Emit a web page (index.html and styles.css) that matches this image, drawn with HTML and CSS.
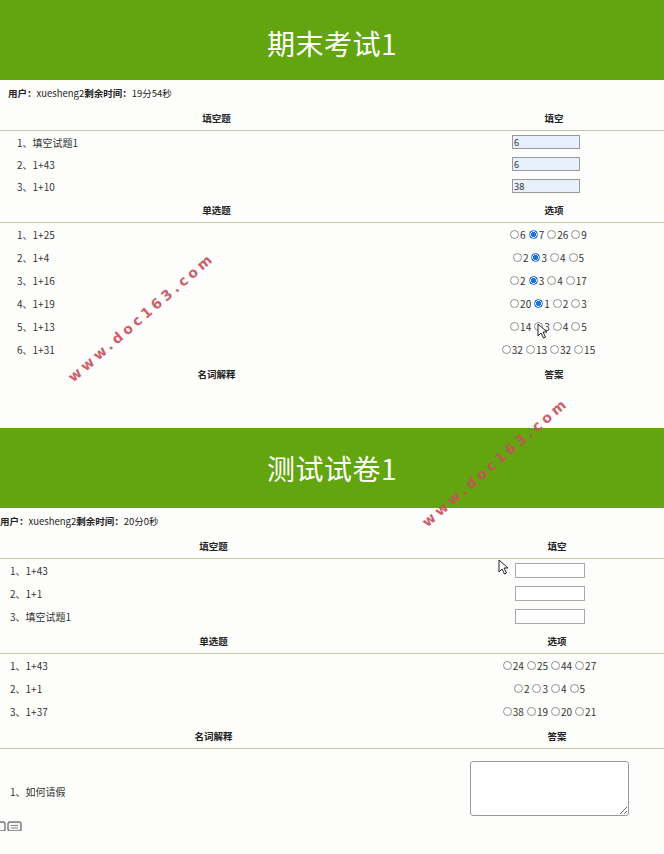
FILE: index.html
```html
<!DOCTYPE html>
<html lang="zh-CN">
<head>
<meta charset="utf-8">
<title>在线考试</title>
<link rel="stylesheet" href="styles.css">
</head>
<body>
<div class="page">
  <section class="exam">
    <header class="exam-title">期末考试1</header>
    <p class="exam-info"><b>用户：</b>xuesheng2<b>剩余时间：</b>19分54秒</p>
    <div class="sheet">
      <div class="sheet-head"><span>填空题</span><span class="head-a">填空</span></div>
      <div class="sheet-row sheet-row--short"><span class="q">1、填空试题1</span><span class="a"><input class="blank blank--filled" value="6"></span></div>
      <div class="sheet-row sheet-row--short"><span class="q">2、1+43</span><span class="a"><input class="blank blank--filled" value="6"></span></div>
      <div class="sheet-row sheet-row--short"><span class="q">3、1+10</span><span class="a"><input class="blank blank--filled" value="38"></span></div>

      <div class="sheet-head"><span>单选题</span><span class="head-a">选项</span></div>
      <div class="sheet-row"><span class="q">1、1+25</span><span class="a">
        <label class="opt"><input type="radio" name="a1">6</label>
        <label class="opt"><input type="radio" name="a1" checked>7</label>
        <label class="opt"><input type="radio" name="a1">26</label>
        <label class="opt"><input type="radio" name="a1">9</label></span></div>
      <div class="sheet-row"><span class="q">2、1+4</span><span class="a">
        <label class="opt"><input type="radio" name="a2">2</label>
        <label class="opt"><input type="radio" name="a2" checked>3</label>
        <label class="opt"><input type="radio" name="a2">4</label>
        <label class="opt"><input type="radio" name="a2">5</label></span></div>
      <div class="sheet-row"><span class="q">3、1+16</span><span class="a">
        <label class="opt"><input type="radio" name="a3">2</label>
        <label class="opt"><input type="radio" name="a3" checked>3</label>
        <label class="opt"><input type="radio" name="a3">4</label>
        <label class="opt"><input type="radio" name="a3">17</label></span></div>
      <div class="sheet-row"><span class="q">4、1+19</span><span class="a">
        <label class="opt"><input type="radio" name="a4">20</label>
        <label class="opt"><input type="radio" name="a4" checked>1</label>
        <label class="opt"><input type="radio" name="a4">2</label>
        <label class="opt"><input type="radio" name="a4">3</label></span></div>
      <div class="sheet-row"><span class="q">5、1+13</span><span class="a">
        <label class="opt"><input type="radio" name="a5">14</label>
        <label class="opt"><input type="radio" name="a5">3</label>
        <label class="opt"><input type="radio" name="a5">4</label>
        <label class="opt"><input type="radio" name="a5">5</label></span></div>
      <div class="sheet-row"><span class="q">6、1+31</span><span class="a">
        <label class="opt"><input type="radio" name="a6">32</label>
        <label class="opt"><input type="radio" name="a6">13</label>
        <label class="opt"><input type="radio" name="a6">32</label>
        <label class="opt"><input type="radio" name="a6">15</label></span></div>

      <div class="sheet-head sheet-head--open"><span>名词解释</span><span class="head-a">答案</span></div>
    </div>
  </section>

  <section class="exam exam--b">
    <header class="exam-title">测试试卷1</header>
    <p class="exam-info"><b>用户：</b>xuesheng2<b>剩余时间：</b>20分0秒</p>
    <div class="sheet">
      <div class="sheet-head"><span>填空题</span><span class="head-a">填空</span></div>
      <div class="sheet-row"><span class="q">1、1+43</span><span class="a"><input class="blank"></span></div>
      <div class="sheet-row"><span class="q">2、1+1</span><span class="a"><input class="blank"></span></div>
      <div class="sheet-row"><span class="q">3、填空试题1</span><span class="a"><input class="blank"></span></div>

      <div class="sheet-head"><span>单选题</span><span class="head-a">选项</span></div>
      <div class="sheet-row"><span class="q">1、1+43</span><span class="a">
        <label class="opt"><input type="radio" name="b1">24</label>
        <label class="opt"><input type="radio" name="b1">25</label>
        <label class="opt"><input type="radio" name="b1">44</label>
        <label class="opt"><input type="radio" name="b1">27</label></span></div>
      <div class="sheet-row"><span class="q">2、1+1</span><span class="a">
        <label class="opt"><input type="radio" name="b2">2</label>
        <label class="opt"><input type="radio" name="b2">3</label>
        <label class="opt"><input type="radio" name="b2">4</label>
        <label class="opt"><input type="radio" name="b2">5</label></span></div>
      <div class="sheet-row"><span class="q">3、1+37</span><span class="a">
        <label class="opt"><input type="radio" name="b3">38</label>
        <label class="opt"><input type="radio" name="b3">19</label>
        <label class="opt"><input type="radio" name="b3">20</label>
        <label class="opt"><input type="radio" name="b3">21</label></span></div>

      <div class="sheet-head"><span>名词解释</span><span class="head-a">答案</span></div>
      <div class="sheet-row sheet-row--tall"><span class="q">1、如何请假</span><span class="a"><textarea class="essay"></textarea></span></div>
    </div>
  </section>

  <span class="watermark watermark--one">www.doc163.com</span>
  <span class="watermark watermark--two">www.doc163.com</span>

  <svg class="cursor cursor--one" viewBox="0 0 11 16" width="11" height="16"><path d="M1 1 L1 13 L4 10 L6.5 15 L8.5 14 L6 9 L10 9 Z" fill="#fff" stroke="#222" stroke-width="1" stroke-linejoin="round"/></svg>
  <svg class="cursor cursor--two" viewBox="0 0 11 16" width="11" height="16"><path d="M1 1 L1 13 L4 10 L6.5 15 L8.5 14 L6 9 L10 9 Z" fill="#fff" stroke="#222" stroke-width="1" stroke-linejoin="round"/></svg>

  <svg class="taskicon" viewBox="0 0 24 10" width="24" height="10"><rect x="-4" y="1" width="9" height="9" rx="2" fill="none" stroke="#777" stroke-width="1.4"/><rect x="8" y="1" width="13" height="9" rx="2" fill="#f4f4f4" stroke="#777" stroke-width="1.4"/><path d="M11 4.5h7M11 7h7" stroke="#888" stroke-width="1"/></svg>
</div>
</body>
</html>
```

FILE: styles.css
```css
* { box-sizing: border-box; }

html, body {
  margin: 0;
  padding: 0;
  background: #ffffff;
}

body {
  font-family: "Noto Sans CJK SC", "Noto Sans", sans-serif;
  color: #333;
}

.page {
  position: relative;
  width: 664px;
  height: 854px;
  overflow: hidden;
  background: #fdfefc;
}

.exam {
  margin-bottom: 41px;
}

.exam-title {
  height: 80px;
  background: #63a50e;
  color: #fff;
  font-size: 28px;
  font-weight: 400;
  display: flex;
  align-items: center;
  justify-content: center;
  padding-top: 6px;
  letter-spacing: 0.5px;
}

.exam--b .exam-title {
  padding-top: 0;
}

.exam-info {
  margin: 6px 0 5px;
  padding-left: 8px;
  height: 14px;
  line-height: 14px;
  font-size: 9.5px;
  color: #222;
}

.exam-info b {
  font-weight: 700;
}

.exam--b .exam-info {
  padding-left: 0;
}

.sheet-head,
.sheet-row {
  display: grid;
  grid-template-columns: 433px 1fr;
  align-items: center;
}

.exam--b .sheet-head,
.exam--b .sheet-row {
  grid-template-columns: 427px 1fr;
}

.sheet-head {
  height: 26px;
  border-bottom: 1px solid #c8c8a0;
  font-size: 9.5px;
  font-weight: 700;
  color: #222;
  text-align: center;
}

.sheet-head--open {
  border-bottom-color: transparent;
}

.head-a {
  padding-left: 11px;
}

.exam--b .head-a {
  padding-left: 23px;
}

.sheet-row {
  height: 23px;
  font-size: 10px;
}

.sheet-row--short {
  height: 22px;
}

.sheet-row--tall {
  height: 78px;
}

.q {
  padding-left: 17px;
  color: #333;
  white-space: nowrap;
}

.sheet-row--tall .q {
  padding-top: 7px;
}

.exam--b .q {
  padding-left: 10px;
}

.a {
  display: flex;
  justify-content: center;
  align-items: center;
  gap: 3px;
}

.exam--b .a {
  padding-left: 8px;
}

.blank {
  width: 68px;
  height: 14px;
  padding: 0 1px;
  margin: 0 5px 0 0;
  border: 1px solid #9a9a9a;
  border-radius: 0;
  font: 9px "Noto Sans", sans-serif;
  color: #333;
  background: #fff;
  outline: none;
}

.blank--filled {
  background: #e8effd;
}

.exam--b .blank {
  width: 70px;
  height: 15px;
  margin: 0;
  border-color: #a8a8a8;
}

.opt {
  display: inline-flex;
  align-items: center;
  font-size: 10px;
  color: #333;
  line-height: 1;
}

.opt input {
  appearance: none;
  -webkit-appearance: none;
  width: 9px;
  height: 9px;
  margin: 0 1px 0 0;
  border: 1px solid #8f8f8f;
  border-radius: 50%;
  background: #fff;
}

.opt input:checked {
  border: 1px solid #1a6fd8;
  background: radial-gradient(circle, #1a6fd8 0 2.3px, #fff 2.8px 3.2px, #1a6fd8 3.6px);
}

.essay {
  width: 159px;
  height: 55px;
  margin: 0;
  border: 1px solid #9a9a9a;
  border-radius: 3px;
  background: #fff;
  resize: both;
}

.watermark {
  position: absolute;
  font-family: "DejaVu Sans", sans-serif;
  font-weight: 700;
  font-size: 14px;
  letter-spacing: 3.6px;
  color: #c9505c;
  transform-origin: 0 50%;
  transform: rotate(-41deg);
  white-space: nowrap;
  opacity: 0.9;
}

.watermark--one {
  left: 70px;
  top: 371px;
}

.watermark--two {
  left: 424px;
  top: 516px;
}

.cursor {
  position: absolute;
}

.cursor--one {
  left: 537px;
  top: 323px;
}

.cursor--two {
  left: 498px;
  top: 559px;
}

.taskicon {
  position: absolute;
  left: 0;
  top: 821px;
}
```
